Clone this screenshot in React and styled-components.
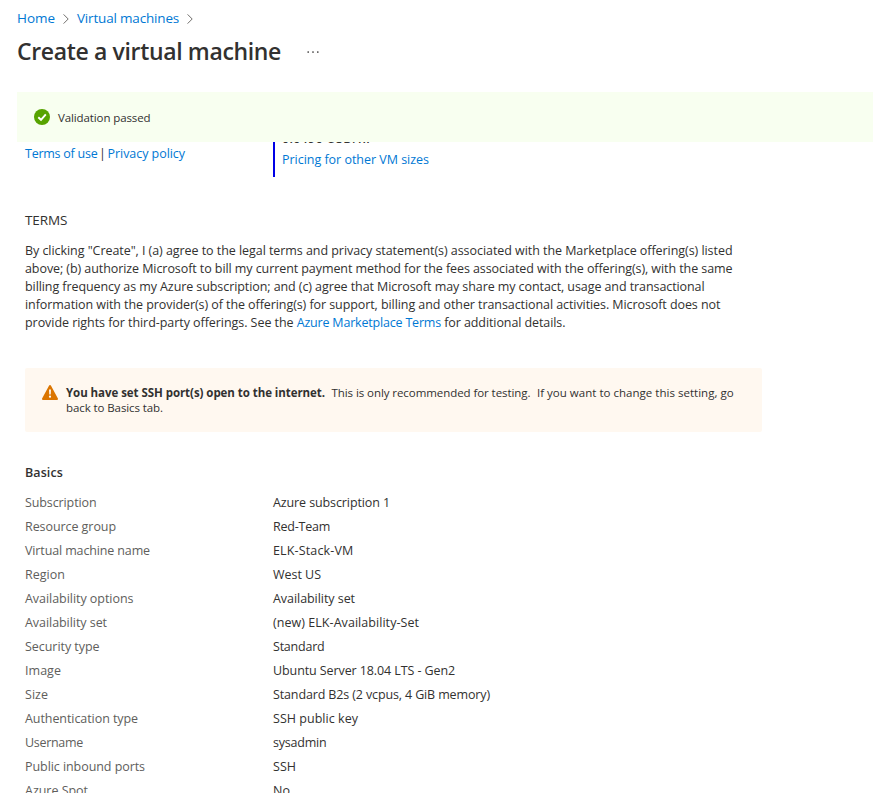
import React from "react";
import styled, { createGlobalStyle } from "styled-components";

const GlobalStyle = createGlobalStyle`
  * { box-sizing: border-box; }
  body {
    margin: 0;
    background: #fff;
    color: #323130;
    font-family: "Open Sans", "Noto Sans", sans-serif;
    font-size: 12.5px;
    line-height: 18px;
    overflow: hidden;
  }
`;

const Page = styled.div`
  display: flex;
  flex-direction: column;
  height: 793px;
  overflow: hidden;
`;

const Header = styled.header`
  display: flex;
  flex-direction: column;
  height: 92px;
  padding: 9px 17px 0;
`;

const Breadcrumb = styled.nav`
  display: flex;
  align-items: center;
  height: 18px;
  font-size: 13.5px;
`;

const Text = styled.span`
  letter-spacing: ${(p) => p.$track || 0}px;
  white-space: pre;
`;

const Link = styled.a`
  color: #0078d4;
  letter-spacing: ${(p) => p.$track || 0}px;
  white-space: pre;
  text-decoration: none;
`;

const Crumb = styled(Link)`
  width: ${(p) => p.$width}px;
`;

const Chevron = styled.svg`
  width: 6px;
  height: 10px;
  margin: 2px 8px 0 8px;
  fill: none;
  stroke: #706e6c;
  stroke-width: 1;
`;

const TitleRow = styled.div`
  display: flex;
  align-items: center;
  margin-top: 8px;
`;

const Title = styled.h1`
  width: 290px;
  margin: 0;
  font-size: 23px;
  font-weight: 600;
  line-height: 32px;
  letter-spacing: -0.35px;
  white-space: nowrap;
`;

const MoreIcon = styled.svg`
  width: 12px;
  height: 4px;
  margin-top: 2px;
  fill: #323130;
`;

const SuccessBanner = styled.div`
  display: flex;
  flex: none;
  align-items: center;
  gap: 8px;
  height: 50px;
  margin-left: 17px;
  padding: 0 17px;
  background: #f8fff0;
  font-size: 11.5px;
`;

const StatusIcon = styled.svg`
  flex: none;
  width: 16px;
  height: 16px;
`;

const BannerText = styled(Text)`
  padding-top: 1px;
`;

const Content = styled.main`
  flex: 1;
  min-height: 0;
  padding-left: 25px;
  overflow: hidden;
`;

const Summary = styled.section`
  display: flex;
  height: 35px;
`;

const LegalLinks = styled.div`
  display: flex;
  width: 248px;
  padding-top: 3px;
`;

const TermsOfUse = styled(Link)`
  width: 74px;
`;

const Divider = styled.span`
  width: 8.5px;
`;

const Pricing = styled.div`
  display: flex;
  flex-direction: column;
  gap: 3px;
  height: 47px;
  margin-top: -12px;
  padding-left: 7px;
  border-left: 2px solid #0000e6;
`;

const Price = styled.strong`
  font-weight: 600;
  letter-spacing: 0.3px;
`;

const TermsHeading = styled.h2`
  margin: 34px 0 13px;
  font-size: 13.5px;
  font-weight: 400;
  line-height: 18px;
  letter-spacing: -0.1px;
`;

const Terms = styled.p`
  display: flex;
  flex-direction: column;
  margin: 0 0 36px;
`;

const TermsLine = styled(Text)`
  display: block;
  height: 18px;
`;

const Warning = styled.div`
  display: flex;
  gap: 8px;
  width: 737px;
  height: 64px;
  padding: 17px 17px 0;
  border-radius: 2px;
  background: #fff8f0;
  font-size: 11.5px;
  line-height: 15px;
`;

const WarningBody = styled.div`
  display: flex;
  flex-direction: column;
`;

const WarningLine = styled.div`
  display: flex;
  gap: 6.5px;
`;

const Strong = styled(Text)`
  font-weight: 700;
`;

const SectionHeading = styled.h2`
  margin: 32px 0 9px;
  font-size: 12.5px;
  font-weight: 600;
  line-height: 18px;
  letter-spacing: 0.08px;
`;

const Details = styled.dl`
  margin: 0;
`;

const DetailRow = styled.div`
  display: grid;
  grid-template-columns: 248px 1fr;
  height: 24px;
  line-height: 24px;
`;

const Label = styled.dt`
  color: #605e5c;
  letter-spacing: ${(p) => p.$track}px;
`;

const Value = styled.dd`
  margin: 0;
  letter-spacing: ${(p) => p.$track}px;
`;

const termsLines = [
  ['By clicking "Create", I (a) agree to the legal terms and privacy statement(s) associated with the Marketplace offering(s) listed', -0.055],
  ["above; (b) authorize Microsoft to bill my current payment method for the fees associated with the offering(s), with the same", -0.077],
  ["billing frequency as my Azure subscription; and (c) agree that Microsoft may share my contact, usage and transactional", -0.083],
  ["information with the provider(s) of the offering(s) for support, billing and other transactional activities. Microsoft does not", -0.078],
];

const details = [
  ["Subscription", -0.11, "Azure subscription 1", -0.106],
  ["Resource group", -0.069, "Red-Team", -0.228],
  ["Virtual machine name", -0.132, "ELK-Stack-VM", 0.152],
  ["Region", 0.023, "West US", -0.027],
  ["Availability options", -0.043, "Availability set", -0.054],
  ["Availability set", -0.054, "(new) ELK-Availability-Set", 0.051],
  ["Security type", -0.049, "Standard", -0.221],
  ["Image", 0.037, "Ubuntu Server 18.04 LTS - Gen2", -0.096],
  ["Size", 0.028, "Standard B2s (2 vcpus, 4 GiB memory)", -0.131],
  ["Authentication type", -0.071, "SSH public key", 0.034],
  ["Username", -0.3, "sysadmin", -0.208],
  ["Public inbound ports", -0.064, "SSH", 0.025],
  ["Azure Spot", -0.028, "No", 0.034],
];

function CrumbChevron() {
  return (
    <Chevron viewBox="0 0 6 10">
      <path d="M.6.4 5.2 5 .6 9.6" />
    </Chevron>
  );
}

export default function App() {
  return (
    <Page>
      <GlobalStyle />
      <Header>
        <Breadcrumb>
          <Crumb $width={38} $track={-0.05}>Home</Crumb>
          <CrumbChevron />
          <Crumb $width={102} $track={-0.18}>Virtual machines</Crumb>
          <CrumbChevron />
        </Breadcrumb>
        <TitleRow>
          <Title>Create a virtual machine</Title>
          <MoreIcon viewBox="0 0 12 4">
            <circle cx="1.2" cy="2" r="0.85" />
            <circle cx="6" cy="2" r="0.85" />
            <circle cx="10.8" cy="2" r="0.85" />
          </MoreIcon>
        </TitleRow>
      </Header>

      <SuccessBanner>
        <StatusIcon viewBox="0 0 16 16">
          <circle cx="8" cy="8" r="8" fill="#57a300" />
          <path d="M4.3 8.2 7 10.8 11.8 5.4" fill="none" stroke="#fff" strokeWidth="1.9" />
        </StatusIcon>
        <BannerText $track={-0.107}>Validation passed</BannerText>
      </SuccessBanner>

      <Content>
        <Summary>
          <LegalLinks>
            <TermsOfUse $track={-0.242}>Terms of use</TermsOfUse>
            <Divider>|</Divider>
            <Link $track={-0.05}>Privacy policy</Link>
          </LegalLinks>
          <Pricing>
            <Price>0.0496 USD/hr</Price>
            <Link $track={-0.024}>Pricing for other VM sizes</Link>
          </Pricing>
        </Summary>

        <TermsHeading>TERMS</TermsHeading>
        <Terms>
          {termsLines.map(([line, track]) => (
            <TermsLine key={line} $track={track}>{line}</TermsLine>
          ))}
          <TermsLine>
            <Text $track={-0.055}>provide rights for third-party offerings. See the </Text>
            <Link $track={-0.19}>Azure Marketplace Terms</Link>
            <Text $track={-0.09}> for additional details.</Text>
          </TermsLine>
        </Terms>

        <Warning>
          <StatusIcon viewBox="0 0 16 16">
            <path d="M7.1.6a1 1 0 0 1 1.8 0l7 12.9a1 1 0 0 1-.9 1.5H1a1 1 0 0 1-.9-1.5z" fill="#db7500" />
            <path d="M7.1 4.6h1.8l-.2 5H7.3z" fill="#fff" />
            <circle cx="8" cy="11.7" r="1.1" fill="#fff" />
          </StatusIcon>
          <WarningBody>
            <WarningLine>
              <Strong $track={-0.056}>You have set SSH port(s) open to the internet.</Strong>
              <Text $track={-0.07}>This is only recommended for testing.</Text>
              <Text $track={0.022}>If you want to change this setting, go</Text>
            </WarningLine>
            <Text $track={-0.089}>back to Basics tab.</Text>
          </WarningBody>
        </Warning>

        <SectionHeading>Basics</SectionHeading>
        <Details>
          {details.map(([label, labelTrack, value, valueTrack]) => (
            <DetailRow key={label}>
              <Label $track={labelTrack}>{label}</Label>
              <Value $track={valueTrack}>{value}</Value>
            </DetailRow>
          ))}
        </Details>
      </Content>
    </Page>
  );
}
